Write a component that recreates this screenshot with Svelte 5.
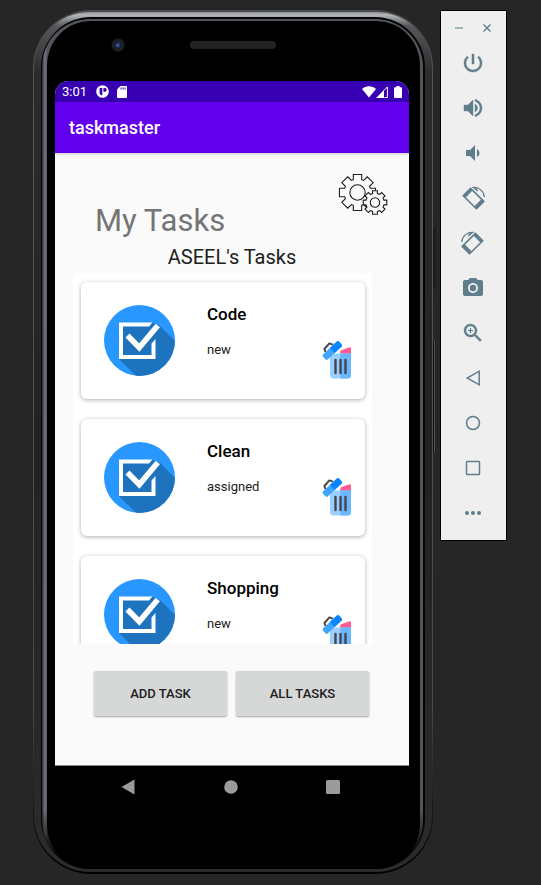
<script>
  const tasks = $state([
    { id: 1, title: 'Code', state: 'new' },
    { id: 2, title: 'Clean', state: 'assigned' },
    { id: 3, title: 'Shopping', state: 'new' }
  ]);

  // Outline of a cog with straight-sided teeth.
  function gear(cx, cy, outer, body, half, teeth) {
    const points = [];
    const spread = Math.asin(half / body);
    const tip = Math.asin(half / outer);
    for (let i = 0; i < teeth; i++) {
      const a = (i * 2 * Math.PI) / teeth - Math.PI / 2;
      for (const [r, t] of [[body, a - spread], [outer, a - tip], [outer, a + tip], [body, a + spread]]) {
        points.push(`${(cx + r * Math.cos(t)).toFixed(2)},${(cy + r * Math.sin(t)).toFixed(2)}`);
      }
    }
    return points.join(' ');
  }

  const bigGear = gear(19.5, 20.5, 18.5, 13.5, 4.2, 8);
  const smallGear = gear(37, 30.5, 12, 9.3, 2.4, 8);
</script>

{#snippet rotate()}
  <path d="M2.2 9.8 9.6 2.4 22.8 15.4 15.4 22.8Z" fill="none" stroke="currentColor" stroke-width="1.6" stroke-linejoin="round" />
  <path d="M2.6 9.4 9.2 2.8 11 4.6 4.4 11.2ZM13.8 20.4 20.4 13.8 22.4 15.8 15.8 22.4Z" stroke="currentColor" stroke-linejoin="round" />
  <path d="M11.5 1.4C17.5.6 22.8 5 23.3 11" fill="none" stroke="currentColor" stroke-width="1.2" />
  <path d="m11 .9 5.2 4.6 1-1-2.6-3Z" />
{/snippet}

<div class="stage">
  <div class="phone">
    <span class="side power"></span>
    <span class="side volume"></span>
    <div class="rail"><div class="lip"><div class="ring"><div class="glass">
      <div class="earpiece">
        <svg class="camera" width="14" height="14" viewBox="0 0 14 14" aria-hidden="true">
          <circle cx="7" cy="7" r="6.6" fill="#1e1f21" />
          <circle cx="7" cy="7" r="4" fill="#182038" />
          <circle cx="7" cy="7" r="2.4" fill="#2b3a66" />
          <circle cx="6.6" cy="7.6" r="1" fill="#5d70ab" />
        </svg>
        <span class="speaker"></span>
      </div>

      <main class="screen">
        <div class="status">
          <span>3:01</span>
          <svg width="13" height="13" viewBox="0 0 13 13" aria-hidden="true">
            <circle cx="6.5" cy="6.5" r="6.3" fill="#fff" />
            <path d="M3.6 3h2.7v7.2H5.1L3.6 8.8ZM7.4 3h1.4a1.9 1.9 0 0 1 0 3.8H7.4Z" fill="#3700b3" />
          </svg>
          <svg class="sd" width="10" height="12" viewBox="0 0 10 12" aria-hidden="true">
            <path d="M3.4 0H9a1 1 0 0 1 1 1v10a1 1 0 0 1-1 1H1a1 1 0 0 1-1-1V3.4Z" fill="#fff" />
            <path d="M3.6 1.6h1v2h-1zM5.6 1.6h1v2h-1zM7.6 1.6h1v2h-1z" fill="#3700b3" />
          </svg>
          <span class="grow"></span>
          <svg width="14" height="12" viewBox="0 0 14 12" aria-hidden="true">
            <path d="M7 11.6 0 3C3.8-.6 10.2-.6 14 3Z" fill="#fff" />
          </svg>
          <svg width="12" height="12" viewBox="0 0 12 12" aria-hidden="true">
            <path d="M0 12 8 4v8Z" fill="#fff" />
            <path d="M7.500 4.800 11.400.9v10.600H8.500" fill="none" stroke="#fff" />
          </svg>
          <svg class="battery" width="8" height="12" viewBox="0 0 8 12" aria-hidden="true">
            <path d="M2.4 0h3.200v1.200H7a1 1 0 0 1 1 1V11a1 1 0 0 1-1 1H1a1 1 0 0 1-1-1V2.200a1 1 0 0 1 1-1h1.400Z" fill="#fff" />
          </svg>
        </div>
        <header class="appbar">taskmaster</header>

        <div class="content">
          <div class="top">
            <h1>My Tasks</h1>
            <button class="plain" aria-label="Settings">
              <svg width="50" height="44" viewBox="0 0 50 44" fill="#fafafa" stroke="#1c1c1c" stroke-width="1.1" aria-hidden="true">
                <polygon points={bigGear} />
                <circle cx="19.5" cy="20.5" r="7.7" />
                <polygon points={smallGear} />
                <circle cx="37" cy="30.5" r="4.7" />
              </svg>
            </button>
          </div>
          <h2>ASEEL's Tasks</h2>

          <ul class="list">
            {#each tasks as task (task.id)}
              <li class="card">
                <svg class="check" width="71" height="71" viewBox="0 0 71 71" aria-hidden="true">
                  <defs><clipPath id="disc{task.id}"><circle cx="35.5" cy="35.5" r="35.5" /></clipPath></defs>
                  <g clip-path="url(#disc{task.id})">
                    <path d="M0 0h71v71H0Z" fill="#2897ff" />
                    <path d="M15 54 33 72h39V37L56 21 50 18H17Z" fill="#1e73be" />
                  </g>
                  <path d="M48.500 17.500H15V54h36.500V34l-4 4.500V50H19V21.500h26Z" fill="#fff" />
                  <path d="M23.500 30.500 35.300 42.500 53.800 20.500" fill="none" stroke="#fff" stroke-width="5.600" />
                </svg>
                <div class="text">
                  <h3>{task.title}</h3>
                  <p>{task.state}</p>
                </div>
                <button class="plain" aria-label="Delete {task.title}">
                  <svg width="30" height="38" viewBox="0 0 30 38" aria-hidden="true">
                    <path d="M18 13 18.5 9.500 27.500 6.300Q29 6 29 7.500V13Z" fill="#ff5c93" />
                    <path d="M8 12.500h21V34a3.500 3.500 0 0 1-3.500 3.500h-14A3.500 3.500 0 0 1 8 34Z" fill="#9bcfff" />
                    <path d="M18.500 12.500H29V34a3.500 3.500 0 0 1-3.500 3.500h-7Z" fill="#6ab6ff" />
                    <path d="M13.500 19v13M18.500 19v13M23.500 19v13" stroke="#43484f" stroke-width="2.400" stroke-linecap="round" />
                    <path d="M3.500 11 2.400 8 7.400 2.400 11 3.600" fill="none" stroke="#484848" stroke-width="2" stroke-linejoin="round" />
                    <g transform="translate(10.300 9.500) rotate(-43)">
                      <rect x="-11" y="-3.500" width="22" height="7" rx="1.800" fill="#3ea6ff" />
                      <path d="M0-3.500H9.200A1.800 1.800 0 0 1 11-1.700V1.700A1.800 1.800 0 0 1 9.200 3.500H0Z" fill="#0a84ff" />
                    </g>
                  </svg>
                </button>
              </li>
            {/each}
          </ul>

          <div class="actions">
            <button>ADD TASK</button>
            <button>ALL TASKS</button>
          </div>
        </div>
      </main>

      <nav class="nav">
        <button class="plain" aria-label="Back"><svg width="14" height="16" viewBox="0 0 14 16"><path d="M13.500.5v15L.5 8Z" fill="#9b9b9b" /></svg></button>
        <button class="plain" aria-label="Home"><svg width="14" height="14" viewBox="0 0 14 14"><circle cx="7" cy="7" r="6.800" fill="#9b9b9b" /></svg></button>
        <button class="plain" aria-label="Overview"><svg width="14" height="14" viewBox="0 0 14 14"><rect width="14" height="14" rx="1.500" fill="#9b9b9b" /></svg></button>
      </nav>
    </div></div></div></div>
  </div>

  <aside class="panel">
    <div class="window">
      <button class="plain" aria-label="Minimize"><svg width="8" height="8" viewBox="0 0 8 8"><path d="M0 4h8" stroke="#8fa4ae" stroke-width="1.600" /></svg></button>
      <button class="plain" aria-label="Close"><svg width="8" height="8" viewBox="0 0 8 8"><path d="m.5.5 7 7m0-7-7 7" stroke="#607d8b" stroke-width="1.400" /></svg></button>
    </div>
    <button class="plain tool" aria-label="Power"><svg viewBox="0 0 24 24"><path d="M13 3h-2v10h2V3zm4.830 2.170l-1.420 1.420C17.990 7.860 19 9.810 19 12c0 3.870-3.130 7-7 7s-7-3.130-7-7c0-2.190 1.010-4.140 2.580-5.420L6.170 5.170C4.230 6.820 3 9.260 3 12c0 4.970 4.030 9 9 9s9-4.030 9-9c0-2.740-1.230-5.180-3.170-6.830z" stroke="currentColor" stroke-width=".5" /></svg></button>
    <button class="plain tool" aria-label="Volume up"><svg viewBox="0 0 24 24"><path d="M3 9v6h4l5 5V4L7 9H3zm13.500 3c0-1.770-1.020-3.290-2.500-4.030v8.050c1.480-.73 2.500-2.250 2.500-4.020zM14 3.230v2.060c2.890.86 5 3.540 5 6.710s-2.110 5.850-5 6.710v2.060c4.010-.91 7-4.490 7-8.770s-2.990-7.860-7-8.770z" stroke="currentColor" stroke-width=".4" /></svg></button>
    <button class="plain tool" aria-label="Volume down"><svg viewBox="0 0 24 24"><path d="M18.500 12c0-1.770-1.020-3.290-2.500-4.030v8.050c1.480-.73 2.500-2.250 2.500-4.020zM5 9v6h4l5 5V4L9 9H5z" /></svg></button>
    <button class="plain tool" aria-label="Rotate left"><svg viewBox="0 0 24 24">{@render rotate()}</svg></button>
    <button class="plain tool" aria-label="Rotate right"><svg viewBox="0 0 24 24"><g transform="matrix(-1 0 0 1 24 0)">{@render rotate()}</g></svg></button>
    <button class="plain tool" aria-label="Take screenshot"><svg viewBox="0 0 24 24"><circle cx="12" cy="12" r="3.200" /><path d="M9 2L7.170 4H4c-1.100 0-2 .9-2 2v12c0 1.100.9 2 2 2h16c1.100 0 2-.9 2-2V6c0-1.100-.9-2-2-2h-3.170L15 2H9zm3 15c-2.760 0-5-2.240-5-5s2.240-5 5-5 5 2.240 5 5-2.240 5-5 5z" /></svg></button>
    <button class="plain tool" aria-label="Zoom"><svg viewBox="0 0 24 24"><path d="M15.500 14h-.79l-.28-.27C15.410 12.590 16 11.110 16 9.500 16 5.910 13.090 3 9.500 3S3 5.910 3 9.500 5.910 16 9.500 16c1.610 0 3.090-.59 4.230-1.570l.27.28v.79l5 4.990L20.490 19l-4.990-5zm-6 0C7.010 14 5 11.990 5 9.500S7.010 5 9.500 5 14 7.010 14 9.500 11.990 14 9.500 14z" stroke="currentColor" stroke-width=".4" /><path d="M9.500 7v5M7 9.500h5" stroke="currentColor" stroke-width="1.200" /></svg></button>
    <button class="plain tool" aria-label="Back"><svg viewBox="0 0 24 24"><path d="M18.200 5.200v13.600L6.200 12Z" fill="none" stroke="currentColor" stroke-width="1.500" /></svg></button>
    <button class="plain tool" aria-label="Home"><svg viewBox="0 0 24 24"><circle cx="12" cy="12" r="6.500" fill="none" stroke="currentColor" stroke-width="1.500" /></svg></button>
    <button class="plain tool" aria-label="Overview"><svg viewBox="0 0 24 24"><rect x="5.500" y="5.500" width="13" height="13" rx=".8" fill="none" stroke="currentColor" stroke-width="1.500" /></svg></button>
    <button class="plain tool" aria-label="More"><svg viewBox="0 0 24 24"><circle cx="6" cy="12" r="2" /><circle cx="12" cy="12" r="2" /><circle cx="18" cy="12" r="2" /></svg></button>
  </aside>
</div>

<style>
  :global(body) {
    margin: 0;
    background: #262626;
  }
  .stage {
    box-sizing: border-box;
    min-height: 100vh;
    display: flex;
    align-items: flex-start;
    gap: 7px;
    padding: 10px 34px 12px 33px;
    font-family: Roboto, sans-serif;
    color: #202020;
  }
  h1, h2, h3, p, ul {
    margin: 0;
    padding: 0;
  }
  .plain {
    display: flex;
    padding: 0;
    border: 0;
    background: none;
    cursor: pointer;
  }
  svg {
    display: block;
    flex: none;
  }

  /* Phone body: concentric shells from the outer edge to the glass */
  .phone {
    position: relative;
    flex: 1;
    min-width: 0;
    box-sizing: border-box;
    padding: 2px 1px;
    border-radius: 58px;
    background: linear-gradient(#4a4a4a, #585858 90px, #484848 700px, #000 850px);
  }
  .rail {
    padding: 5px 7px 3px;
    border-radius: 56px;
    background: linear-gradient(#8d9094, #b4b7ba 3px, #55575a 14px, #2c2c2c 60px, #222 50%, #2b2b2b);
  }
  .lip {
    padding: 2px 2px 0 1px;
    border-radius: 50px;
    background: #050505;
  }
  .ring {
    padding: 2px 3px 0 5px;
    border-radius: 48px;
    background: linear-gradient(transparent calc(100% - 60px), #000 calc(100% - 10px)),
      linear-gradient(90deg, #2c2d30, #74777e 3px, #54555c 5px, #54555c);
  }
  .glass {
    padding: 0 11px 0 8px;
    border-radius: 44px;
    background: #000;
  }
  .side {
    position: absolute;
    left: 100%;
    width: 3px;
    background: #1c1c1c;
  }
  .power {
    top: 217px;
    height: 61px;
  }
  .volume {
    top: 330px;
    height: 113px;
    background: linear-gradient(90deg, #111 1px, #555 1px, #555 2px, #222 2px);
  }
  .earpiece {
    display: grid;
    grid-template-columns: 1fr 86px 1fr;
    align-items: center;
    height: 60px;
    box-sizing: border-box;
    padding-bottom: 12px;
    padding-left: 2px;
  }
  .camera {
    margin-left: 54px;
  }
  .speaker {
    height: 8px;
    border-radius: 4px;
    background: #202322;
  }

  .screen {
    overflow: hidden;
    border-radius: 14px 14px 0 0;
    border-bottom: 1px solid #888;
    background: #fafafa;
  }
  .status {
    display: flex;
    align-items: center;
    height: 21px;
    padding: 0 7px;
    background: #3700b3;
    color: #fff;
    font-size: 13px;
  }
  .status svg:first-of-type {
    margin-left: 9px;
  }
  .status .sd {
    margin-left: 8px;
  }
  .status .grow {
    flex: 1;
  }
  .status .battery {
    margin-left: 6px;
  }
  .appbar {
    position: relative;
    padding: 1px 14px 0;
    background: #6200ee;
    color: #fff;
    font-size: 18px;
    font-weight: 500;
    line-height: 50px;
    box-shadow: 0 1px 3px rgba(0, 0, 0, 0.2);
  }
  .content {
    padding: 19px 0 49px;
  }
  .top {
    display: flex;
    justify-content: space-between;
    align-items: flex-start;
    padding: 0 21px 0 40px;
  }
  h1 {
    padding-top: 29px;
    font-size: 31px;
    font-weight: 400;
    line-height: 40px;
    color: #757575;
  }
  h2 {
    font-size: 20px;
    font-weight: 400;
    line-height: 24px;
    padding: 4px 0;
    text-align: center;
  }
  .list {
    box-sizing: border-box;
    height: 371px;
    margin: 0 37px 0 18px;
    padding: 9px 7px 10px 8px;
    overflow-y: auto;
    scrollbar-width: none;
    list-style: none;
    background: #fff;
  }
  .card {
    display: flex;
    box-sizing: border-box;
    height: 117px;
    margin-bottom: 20px;
    padding: 23px 13px 20px 23px;
    border-radius: 6px;
    background: #fff;
    box-shadow: 0 1px 4px rgba(0, 0, 0, 0.32);
  }
  .text {
    flex: 1;
    min-width: 0;
    padding-left: 32px;
  }
  h3 {
    font-size: 17px;
    font-weight: 500;
    line-height: 18px;
    color: #000;
  }
  p {
    margin-top: 18px;
    font-size: 13px;
    line-height: 18px;
  }
  .card .plain {
    align-self: flex-end;
  }
  .actions {
    display: flex;
    gap: 9px;
    padding: 27px 40px 0 39px;
  }
  .actions button {
    flex: 1;
    height: 45px;
    padding: 0;
    border: 0;
    border-radius: 2px;
    background: #d6d7d7;
    color: #202020;
    font: 500 13px Roboto, sans-serif;
    box-shadow: 0 1px 2px rgba(0, 0, 0, 0.35);
    cursor: pointer;
  }
  .nav {
    display: flex;
    justify-content: space-between;
    align-items: center;
    padding: 13px 69px 74px 66px;
  }

  .panel {
    flex: none;
    width: 64px;
    padding: 0 1px 5px 0;
    border: 1px solid #000;
    background: #efefef;
    color: #607d8b;
  }
  .window {
    display: flex;
    justify-content: space-between;
    align-items: center;
    height: 29px;
    box-sizing: border-box;
    padding: 5px 14px 0;
  }
  .tool {
    width: 100%;
    height: 45px;
    justify-content: center;
    align-items: center;
    color: inherit;
  }
  .tool svg {
    width: 24px;
    height: 24px;
    overflow: visible;
    fill: currentColor;
  }
</style>
